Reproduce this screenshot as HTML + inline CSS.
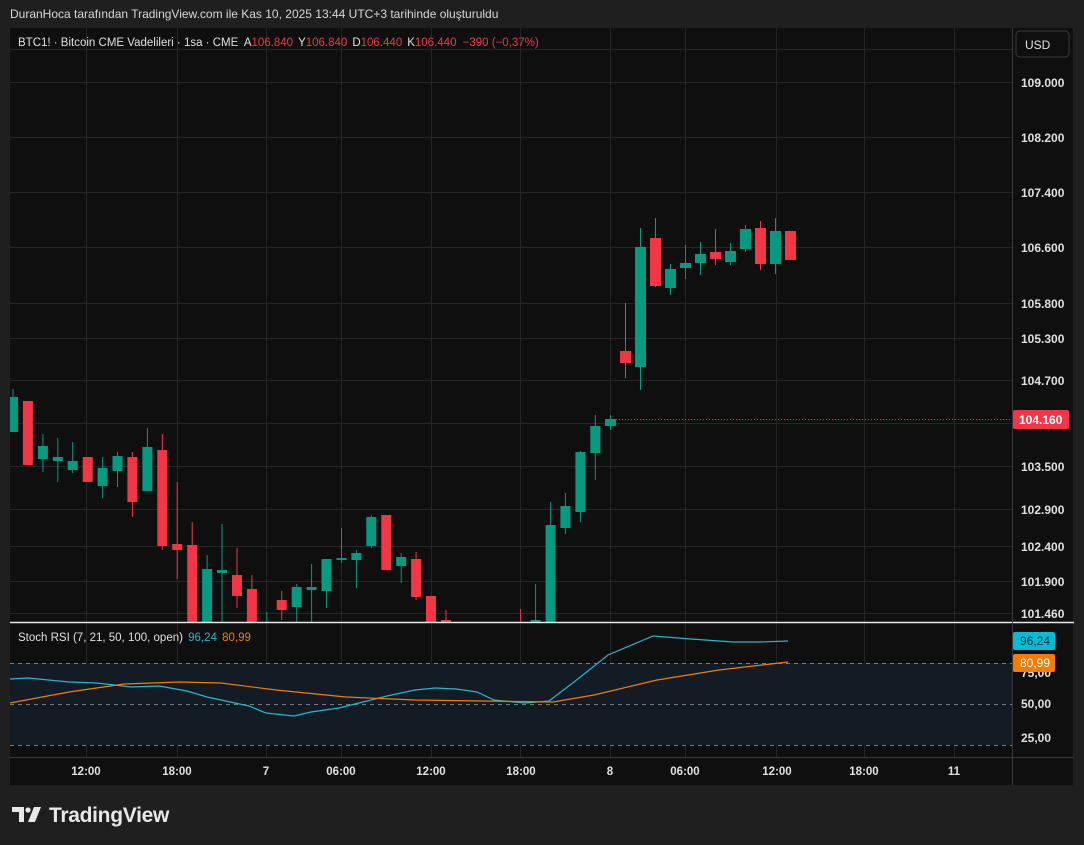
<!DOCTYPE html>
<html><head><meta charset="utf-8"><style>
html,body{margin:0;padding:0;background:#1f1f1f;width:1084px;height:845px;overflow:hidden;font-family:"Liberation Sans",sans-serif}
svg text{font-family:"Liberation Sans",sans-serif}
</style></head><body>
<svg width="1084" height="845" viewBox="0 0 1084 845" xmlns="http://www.w3.org/2000/svg">
<rect width="1084" height="845" fill="#1f1f1f"/>
<text x="10" y="18" fill="#d8d8d8" font-size="12">DuranHoca tarafından TradingView.com ile Kas 10, 2025 13:44 UTC+3 tarihinde oluşturuldu</text>
<rect x="10" y="28" width="1063" height="757" fill="#0f0f0f"/>
<defs><clipPath id="mc"><rect x="10" y="28" width="1002" height="594"/></clipPath></defs>
<g stroke="#262626" stroke-width="1">
<line x1="10" y1="49.5" x2="1012" y2="49.5"/>
<line x1="10" y1="82.5" x2="1012" y2="82.5"/>
<line x1="10" y1="137.5" x2="1012" y2="137.5"/>
<line x1="10" y1="192.5" x2="1012" y2="192.5"/>
<line x1="10" y1="247.5" x2="1012" y2="247.5"/>
<line x1="10" y1="303.5" x2="1012" y2="303.5"/>
<line x1="10" y1="338.5" x2="1012" y2="338.5"/>
<line x1="10" y1="380.5" x2="1012" y2="380.5"/>
<line x1="10" y1="423.5" x2="1012" y2="423.5"/>
<line x1="10" y1="466.5" x2="1012" y2="466.5"/>
<line x1="10" y1="509.5" x2="1012" y2="509.5"/>
<line x1="10" y1="546.5" x2="1012" y2="546.5"/>
<line x1="10" y1="581.5" x2="1012" y2="581.5"/>
<line x1="10" y1="613.5" x2="1012" y2="613.5"/>
<line x1="86.5" y1="28" x2="86.5" y2="757"/>
<line x1="177.5" y1="28" x2="177.5" y2="757"/>
<line x1="266.5" y1="28" x2="266.5" y2="757"/>
<line x1="341.5" y1="28" x2="341.5" y2="757"/>
<line x1="431.5" y1="28" x2="431.5" y2="757"/>
<line x1="520.5" y1="28" x2="520.5" y2="757"/>
<line x1="610.5" y1="28" x2="610.5" y2="757"/>
<line x1="685.5" y1="28" x2="685.5" y2="757"/>
<line x1="776.5" y1="28" x2="776.5" y2="757"/>
<line x1="864.5" y1="28" x2="864.5" y2="757"/>
<line x1="954.5" y1="28" x2="954.5" y2="757"/>
</g>
<g clip-path="url(#mc)">
<g fill="#089981" stroke="#089981">
<line x1="13" y1="389" x2="13" y2="432"/><rect x="8" y="397" width="10" height="35" stroke="none"/>
<line x1="42.9" y1="434" x2="42.9" y2="472"/><rect x="37.9" y="446" width="10" height="13" stroke="none"/>
<line x1="57.8" y1="438" x2="57.8" y2="482"/><rect x="52.8" y="457" width="10" height="4" stroke="none"/>
<line x1="72.7" y1="442" x2="72.7" y2="473"/><rect x="67.7" y="461" width="10" height="9" stroke="none"/>
<line x1="102.6" y1="457" x2="102.6" y2="498"/><rect x="97.6" y="468" width="10" height="18" stroke="none"/>
<line x1="117.5" y1="452" x2="117.5" y2="487"/><rect x="112.5" y="456" width="10" height="15" stroke="none"/>
<line x1="147.4" y1="428" x2="147.4" y2="491"/><rect x="142.4" y="447" width="10" height="44" stroke="none"/>
<line x1="207.1" y1="555" x2="207.1" y2="622"/><rect x="202.1" y="569" width="10" height="53" stroke="none"/>
<line x1="222" y1="524" x2="222" y2="622"/><rect x="217" y="570" width="10" height="3" stroke="none"/>
<line x1="266.8" y1="612" x2="266.8" y2="622"/>
<line x1="296.7" y1="584" x2="296.7" y2="622"/><rect x="291.7" y="587" width="10" height="20" stroke="none"/>
<line x1="311.6" y1="564" x2="311.6" y2="622"/><rect x="306.6" y="587" width="10" height="3" stroke="none"/>
<line x1="326.5" y1="559" x2="326.5" y2="608"/><rect x="321.5" y="559" width="10" height="32" stroke="none"/>
<line x1="341.5" y1="528" x2="341.5" y2="563"/><rect x="336.5" y="558" width="10" height="2" stroke="none"/>
<line x1="356.4" y1="550" x2="356.4" y2="588"/><rect x="351.4" y="553" width="10" height="7" stroke="none"/>
<line x1="371.3" y1="515" x2="371.3" y2="548"/><rect x="366.3" y="517" width="10" height="29" stroke="none"/>
<line x1="401.2" y1="553" x2="401.2" y2="583"/><rect x="396.2" y="557" width="10" height="9" stroke="none"/>
<line x1="535.6" y1="584" x2="535.6" y2="622"/><rect x="530.6" y="620" width="10" height="2" stroke="none"/>
<line x1="550.6" y1="502" x2="550.6" y2="622"/><rect x="545.6" y="525" width="10" height="97" stroke="none"/>
<line x1="565.4" y1="493" x2="565.4" y2="534"/><rect x="560.4" y="506" width="10" height="22" stroke="none"/>
<line x1="580.4" y1="451" x2="580.4" y2="522"/><rect x="575.4" y="452" width="10" height="60" stroke="none"/>
<line x1="595.3" y1="415" x2="595.3" y2="480"/><rect x="590.3" y="426" width="10" height="27" stroke="none"/>
<line x1="610.5" y1="415" x2="610.5" y2="430"/><rect x="605" y="419" width="11" height="7" stroke="none"/>
<line x1="640.5" y1="228" x2="640.5" y2="390"/><rect x="635" y="247" width="11" height="120" stroke="none"/>
<line x1="670.5" y1="264" x2="670.5" y2="295"/><rect x="665" y="269" width="11" height="19" stroke="none"/>
<line x1="685.5" y1="245" x2="685.5" y2="279"/><rect x="680" y="263" width="11" height="5" stroke="none"/>
<line x1="700.5" y1="242" x2="700.5" y2="275"/><rect x="695" y="254" width="11" height="9" stroke="none"/>
<line x1="730.5" y1="243" x2="730.5" y2="265"/><rect x="725" y="251" width="11" height="11" stroke="none"/>
<line x1="745.5" y1="225" x2="745.5" y2="252"/><rect x="740" y="229" width="11" height="20" stroke="none"/>
<line x1="775.5" y1="218" x2="775.5" y2="274"/><rect x="770" y="231" width="11" height="33" stroke="none"/>
</g>
<g fill="#f23645" stroke="#f23645">
<rect x="22.9" y="401" width="10" height="64" stroke="none"/>
<rect x="82.7" y="457" width="10" height="25" stroke="none"/>
<line x1="132.4" y1="452" x2="132.4" y2="517"/><rect x="127.4" y="457" width="10" height="45" stroke="none"/>
<line x1="162.3" y1="434" x2="162.3" y2="550"/><rect x="157.3" y="450" width="10" height="96" stroke="none"/>
<line x1="177.2" y1="482" x2="177.2" y2="579"/><rect x="172.2" y="544" width="10" height="6" stroke="none"/>
<line x1="192.2" y1="522" x2="192.2" y2="622"/><rect x="187.2" y="545" width="10" height="77" stroke="none"/>
<line x1="237" y1="548" x2="237" y2="608"/><rect x="232" y="575" width="10" height="21" stroke="none"/>
<line x1="251.9" y1="575" x2="251.9" y2="622"/><rect x="246.9" y="589" width="10" height="33" stroke="none"/>
<line x1="281.7" y1="591" x2="281.7" y2="620"/><rect x="276.7" y="600" width="10" height="10" stroke="none"/>
<rect x="381.3" y="515" width="10" height="55" stroke="none"/>
<line x1="416.1" y1="552" x2="416.1" y2="600"/><rect x="411.1" y="559" width="10" height="38" stroke="none"/>
<rect x="426" y="596" width="10" height="26" stroke="none"/>
<line x1="446" y1="610" x2="446" y2="622"/><rect x="441" y="620" width="10" height="2" stroke="none"/>
<line x1="520.6" y1="609" x2="520.6" y2="622"/>
<line x1="625.5" y1="303" x2="625.5" y2="378"/><rect x="620" y="351" width="11" height="12" stroke="none"/>
<line x1="655.5" y1="218" x2="655.5" y2="287"/><rect x="650" y="238" width="11" height="48" stroke="none"/>
<line x1="715.5" y1="229" x2="715.5" y2="265"/><rect x="710" y="252" width="11" height="7" stroke="none"/>
<line x1="760.5" y1="221" x2="760.5" y2="270"/><rect x="755" y="228" width="11" height="36" stroke="none"/>
<rect x="785" y="231" width="11" height="29" stroke="none"/>
</g>
<line x1="616" y1="419.5" x2="1012" y2="419.5" stroke="#f23645" stroke-width="1" stroke-dasharray="1 2"/>
</g>
<text x="18" y="46" font-size="11.5" fill="#e0e0e0">BTC1! · Bitcoin CME Vadelileri · 1sa · CME <tspan dx="3">A</tspan><tspan fill="#f23645">106.840</tspan><tspan dx="5">Y</tspan><tspan fill="#f23645">106.840</tspan><tspan dx="5">D</tspan><tspan fill="#f23645">106.440</tspan><tspan dx="5">K</tspan><tspan fill="#f23645">106.440 <tspan dx="3">−390 (−0,37%)</tspan></tspan></text>
<!-- separator -->
<line x1="10" y1="622.5" x2="1074" y2="622.5" stroke="#e8e8e8" stroke-width="1.5"/>
<!-- RSI pane -->
<rect x="10" y="663" width="1002" height="82" fill="#131b24"/>
<g stroke="#7a7a7a" stroke-width="1" stroke-dasharray="4 4">
<line x1="10" y1="663.5" x2="1012" y2="663.5"/>
<line x1="10" y1="704.5" x2="1012" y2="704.5"/>
<line x1="10" y1="745.5" x2="1012" y2="745.5"/>
</g>
<polyline fill="none" stroke="#26b6d0" stroke-width="1.2" points="10,679 28,678 69,682 97,683 131,687 159,686 187,691 207,697 249,706 266,713 294,716 311,712 339,708 359,703 387,696 415,690 435,688 456,689 477,692 494,700 525,703 549,701 574,682 608,655 653,636 691,639 733,642 760,642 788,641"/>
<polyline fill="none" stroke="#f57c00" stroke-width="1.2" points="10,703 69,692 124,684 180,682 221,683 276,690 346,697 415,700 484,701 553,702 594,695 657,680 719,670 788,662"/>
<text x="18" y="641" font-size="11.5" fill="#e0e0e0">Stoch RSI (7, 21, 50, 100, open) <tspan fill="#26b6d0" dx="2">96,24</tspan> <tspan fill="#f57c00" dx="2">80,99</tspan></text>
<!-- time axis -->
<line x1="10" y1="757.5" x2="1074" y2="757.5" stroke="#3a3a3a"/>
<g font-size="11.5" fill="#e0e0e0" text-anchor="middle" font-weight="bold">
<text x="86" y="775">12:00</text><text x="177" y="775">18:00</text><text x="266" y="775">7</text>
<text x="341" y="775">06:00</text><text x="431" y="775">12:00</text><text x="521" y="775">18:00</text>
<text x="610" y="775">8</text><text x="685" y="775">06:00</text><text x="777" y="775">12:00</text>
<text x="864" y="775">18:00</text><text x="954" y="775">11</text>
</g>
<!-- price axis -->
<line x1="1012.5" y1="28" x2="1012.5" y2="785" stroke="#3a3a3a"/>
<rect x="1016" y="31" width="53" height="26" rx="4" fill="#0f0f0f" stroke="#3a3a3a"/>
<text x="1025" y="49" font-size="12" fill="#e0e0e0">USD</text>
<g font-size="12" fill="#e0e0e0" font-weight="bold">
<text x="1021" y="87">109.000</text><text x="1021" y="142">108.200</text><text x="1021" y="197">107.400</text>
<text x="1021" y="252">106.600</text><text x="1021" y="308">105.800</text><text x="1021" y="343">105.300</text>
<text x="1021" y="385">104.700</text><text x="1021" y="471">103.500</text><text x="1021" y="514">102.900</text>
<text x="1021" y="551">102.400</text><text x="1021" y="586">101.900</text><text x="1021" y="618">101.460</text>
<text x="1021" y="677">75,00</text><text x="1021" y="708">50,00</text><text x="1021" y="742">25,00</text>
</g>
<rect x="1013" y="410" width="56" height="19" rx="2" fill="#f23645"/>
<text x="1019" y="424" font-size="12" font-weight="bold" fill="#ffffff">104.160</text>
<rect x="1013" y="632" width="42" height="18" rx="2" fill="#00bcd4"/>
<text x="1020" y="645" font-size="12" fill="#10303a">96,24</text>
<rect x="1013" y="654" width="42" height="18" rx="2" fill="#f57c00"/>
<text x="1020" y="667" font-size="12" fill="#ffffff">80,99</text>
<!-- logo -->
<g fill="#e8e8e8">
<path d="M12 807h12v15h-5v-10h-7z"/>
<circle cx="28" cy="810" r="2.6"/>
<path d="M34 807h7l-6 15h-7z"/>
</g>
<text x="49" y="822" font-size="21" font-weight="bold" fill="#e8e8e8" letter-spacing="-0.3">TradingView</text>
</svg>
</body></html>
